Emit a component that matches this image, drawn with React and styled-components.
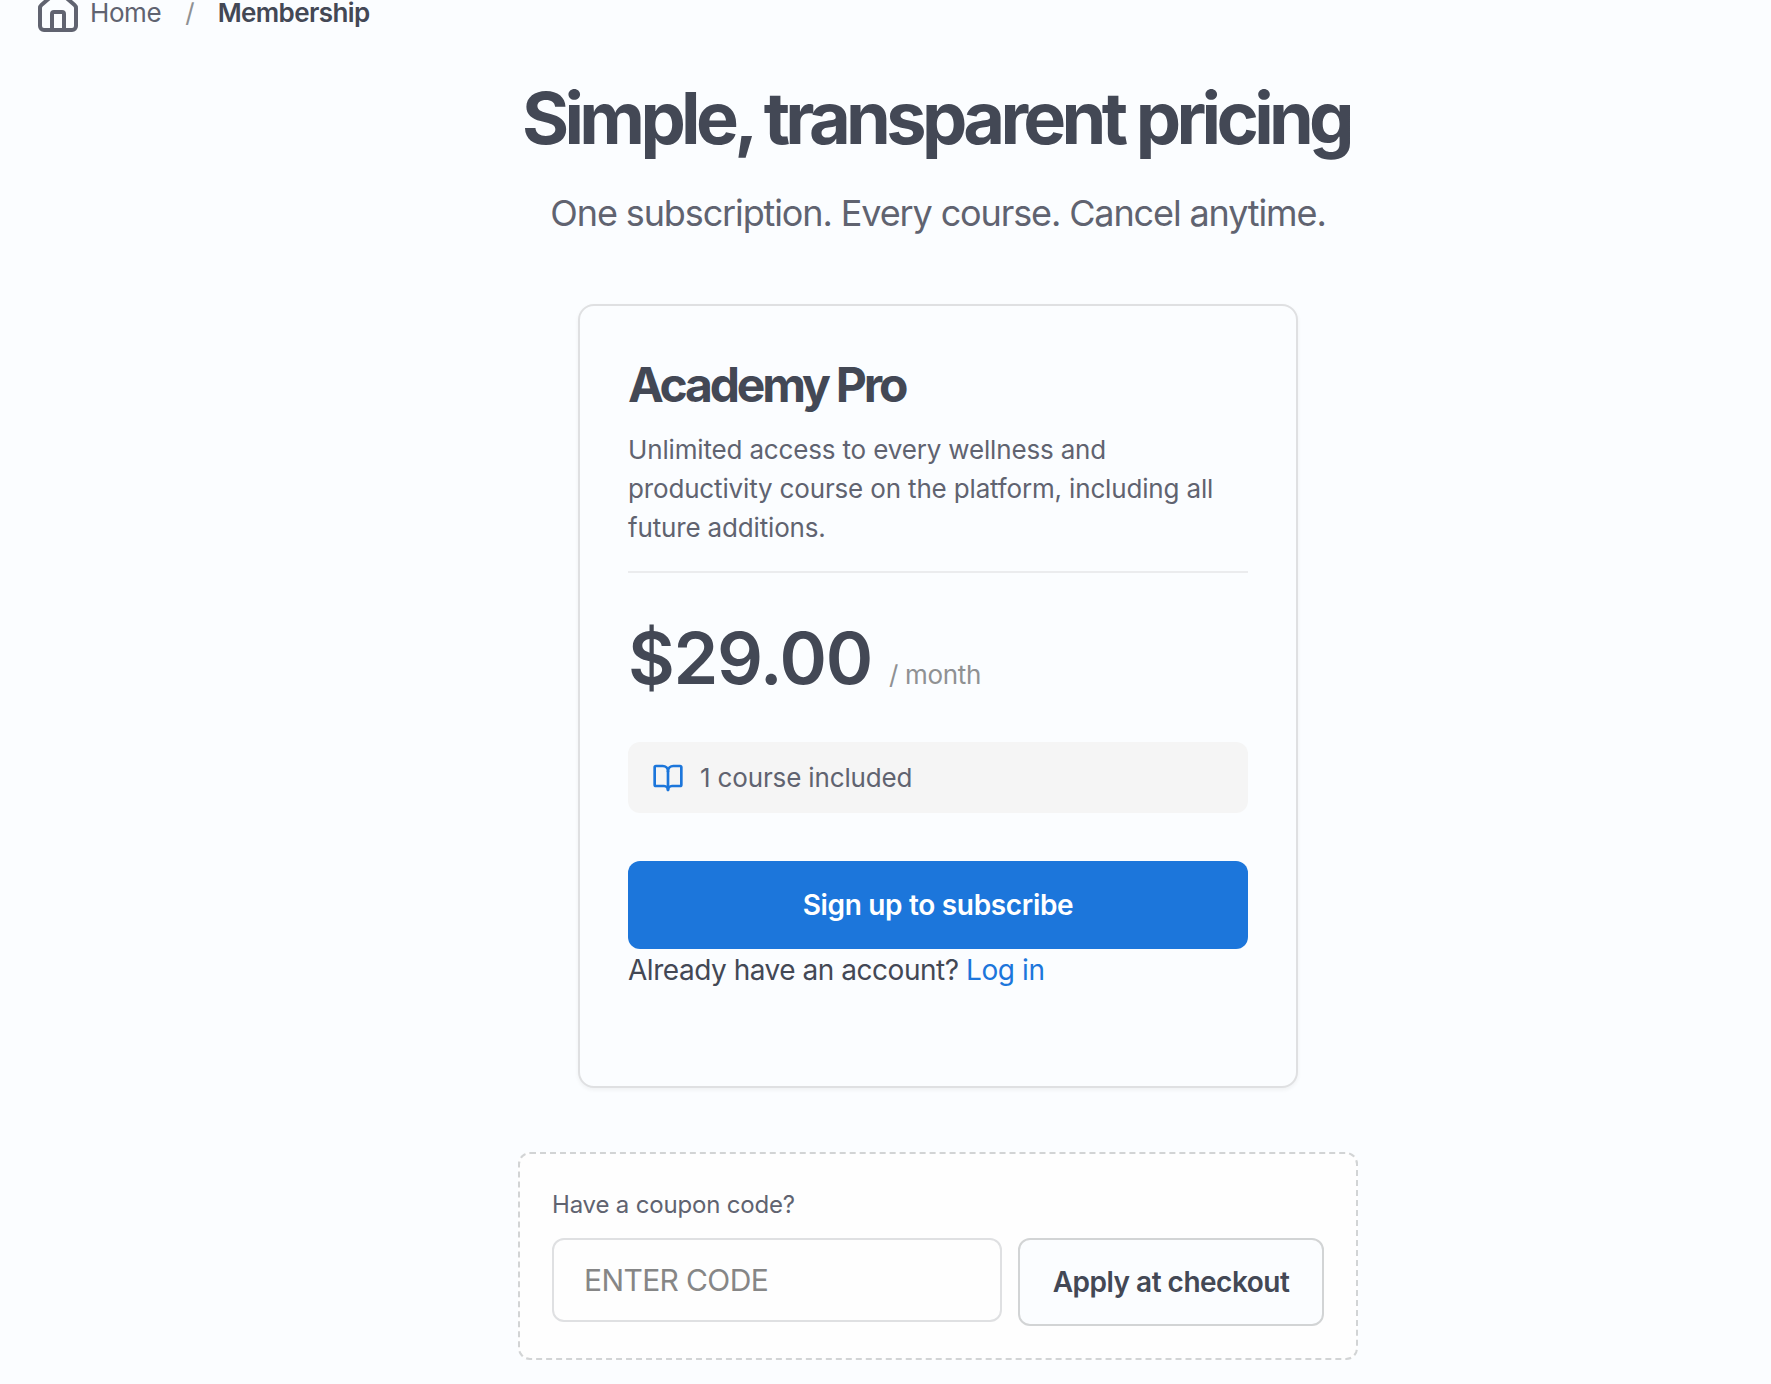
import styled, { createGlobalStyle } from 'styled-components';
import { House, BookOpen } from 'lucide-react';

const GlobalStyle = createGlobalStyle`
  * {
    box-sizing: border-box;
  }

  body {
    margin: 0;
    background-color: #fbfdff;
    color: #434855;
    font-family: Inter, "Noto Sans", sans-serif;
    -webkit-font-smoothing: antialiased;
  }
`;

const Page = styled.div`
  height: 1384px;
  overflow: hidden;
`;

const Breadcrumb = styled.nav`
  display: flex;
  align-items: center;
  height: 48px;
  margin-top: -12px;
  padding-left: 34px;
  font-size: 26px;
  line-height: 26px;

  span {
    padding-top: 2px;
  }
`;

const HomeLink = styled.a`
  display: flex;
  align-items: center;
  gap: 8px;
  color: #606370;
  letter-spacing: -0.4px;
`;

const Separator = styled.span`
  margin: 0 23px 0 24px;
  color: #8f9193;
`;

const CurrentPage = styled.span`
  font-weight: 600;
  letter-spacing: -0.6px;
`;

const Main = styled.main`
  display: flex;
  flex-direction: column;
  align-items: center;
  width: 1876px;
  padding-top: 42px;
`;

const Title = styled.h1`
  margin: 0;
  padding-right: 4px;
  font-size: 72px;
  font-weight: 700;
  line-height: 80px;
  letter-spacing: -4.68px;
  white-space: nowrap;
`;

const Subtitle = styled.p`
  margin: 28px 0 64px;
  color: #606370;
  font-size: 36px;
  line-height: 54px;
  letter-spacing: -1.12px;
  white-space: nowrap;
`;

const Card = styled.section`
  width: 720px;
  height: 784px;
  padding: 48px;
  border: 2px solid #dfe0e2;
  border-radius: 16px;
  background-color: #fbfdff;
  box-shadow: 0 2px 4px rgba(0, 0, 0, 0.05);
`;

const PlanName = styled.h2`
  margin: 0 0 15px;
  padding-top: 1px;
  font-size: 48px;
  font-weight: 700;
  line-height: 60px;
  letter-spacing: -3.2px;
`;

const Description = styled.p`
  margin: 0;
  padding-bottom: 24px;
  border-bottom: 2px solid #ebecee;
  color: #606370;
  font-size: 26px;
  line-height: 39px;
  letter-spacing: -0.16px;
`;

const PriceRow = styled.div`
  display: flex;
  align-items: baseline;
  height: 72px;
  margin-top: 49px;
  line-height: 72px;
`;

const Price = styled.span`
  font-size: 72px;
  font-weight: 600;
  letter-spacing: -1.3px;
`;

const Interval = styled.span`
  margin-left: 17px;
  color: #8f9193;
  font-size: 26px;
  letter-spacing: -0.3px;
`;

const Included = styled.div`
  display: flex;
  align-items: center;
  gap: 16px;
  height: 71px;
  margin-top: 48px;
  padding: 0 24px;
  border-radius: 12px;
  background-color: #f5f5f5;
  color: #606370;
  font-size: 26px;
  letter-spacing: -0.15px;

  svg {
    color: #1c76db;
  }
`;

const SubscribeButton = styled.button`
  display: block;
  width: 100%;
  height: 88px;
  margin-top: 48px;
  border: 0;
  border-radius: 12px;
  background-color: #1c76db;
  color: #fff;
  font-family: inherit;
  font-size: 28px;
  font-weight: 600;
  letter-spacing: -0.32px;
`;

const LoginText = styled.p`
  margin: 0;
  font-size: 28px;
  line-height: 42px;
  letter-spacing: -0.47px;
`;

const LoginLink = styled.a`
  color: #1c76db;
  letter-spacing: -0.4px;
`;

const CouponBox = styled.form`
  width: 840px;
  height: 208px;
  margin-top: 64px;
  padding: 32px;
  border: 2px dashed #d2d4d5;
  border-radius: 12px;
  background-color: #fefefe;
`;

const CouponLabel = styled.label`
  display: block;
  padding-top: 1px;
  color: #606370;
  font-size: 24px;
  line-height: 36px;
  letter-spacing: -0.18px;
`;

const CouponRow = styled.div`
  display: flex;
  align-items: flex-start;
  gap: 16px;
  margin-top: 15px;
`;

const CouponInput = styled.input`
  width: 450px;
  height: 84px;
  padding: 0 30px;
  border: 2px solid #dfe0e2;
  border-radius: 12px;
  background-color: #fefefe;
  font-family: inherit;
  font-size: 30px;
  letter-spacing: -0.62px;

  &::placeholder {
    color: #868686;
    opacity: 1;
  }
`;

const ApplyButton = styled.button`
  width: 306px;
  height: 88px;
  padding: 0;
  border: 2px solid #d2d4d5;
  border-radius: 12px;
  background-color: #fbfdff;
  color: #434855;
  font-family: inherit;
  font-size: 28px;
  font-weight: 600;
  letter-spacing: -0.5px;
`;

function PlanCard() {
  return (
    <Card>
      <PlanName>Academy Pro</PlanName>
      <Description>
        Unlimited access to every wellness and productivity course on the platform, including all
        future additions.
      </Description>
      <PriceRow>
        <Price>$29.00</Price>
        <Interval>/ month</Interval>
      </PriceRow>
      <Included>
        <BookOpen size={32} />
        <span>1 course included</span>
      </Included>
      <SubscribeButton>Sign up to subscribe</SubscribeButton>
      <LoginText>
        Already have an account? <LoginLink>Log in</LoginLink>
      </LoginText>
    </Card>
  );
}

function Coupon() {
  return (
    <CouponBox>
      <CouponLabel htmlFor="coupon">Have a coupon code?</CouponLabel>
      <CouponRow>
        <CouponInput id="coupon" placeholder="ENTER CODE" />
        <ApplyButton type="button">Apply at checkout</ApplyButton>
      </CouponRow>
    </CouponBox>
  );
}

function App() {
  return (
    <Page>
      <GlobalStyle />
      <Breadcrumb>
        <HomeLink>
          <House size={48} />
          <span>Home</span>
        </HomeLink>
        <Separator>/</Separator>
        <CurrentPage>Membership</CurrentPage>
      </Breadcrumb>
      <Main>
        <Title>Simple, transparent pricing</Title>
        <Subtitle>One subscription. Every course. Cancel anytime.</Subtitle>
        <PlanCard />
        <Coupon />
      </Main>
    </Page>
  );
}

export default App;
